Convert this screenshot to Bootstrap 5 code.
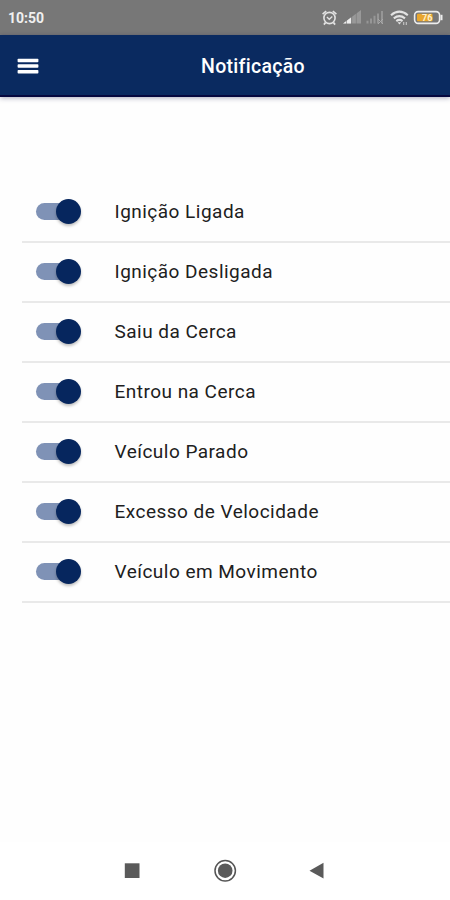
<!DOCTYPE html>
<html lang="pt-BR">
<head>
<meta charset="utf-8">
<meta name="viewport" content="width=device-width, initial-scale=1">
<title>Notificação</title>
<link href="https://cdn.jsdelivr.net/npm/bootstrap@5.3.0/dist/css/bootstrap.min.css" rel="stylesheet">
<style>
  body { font-family: Roboto, "Liberation Sans", sans-serif; background: #fefefe; color: #202020; }
  .status-bar { height: 35px; background: #777; color: #f0f0f0; font-size: 14px; font-weight: 700; line-height: 36px; padding-left: 8px; }
  .status-bar svg, .system-nav svg { display: block; }
  .app-bar { height: 62px; background: #0a2a60; border-bottom: 2px solid #06083f; box-shadow: 0 1px 5px rgba(20, 20, 70, .36); display: grid; grid-template-columns: 56px 1fr 56px; }
  .menu-btn { line-height: 0; border-radius: 0; }
  .app-title { font-size: 19.5px; font-weight: 500; letter-spacing: .3px; line-height: 63px; padding-left: 56px; }
  .settings { padding: 86px 0 0 22px; }
  .settings .setting { height: 60px; border: 0; border-bottom: 2px solid #e9e9e9; border-radius: 0; background: none; padding: 0 0 1px 13.5px; color: inherit; }
  .toggle-box { width: 79px; }
  .settings .form-check-input { width: 44px; height: 17px; margin: 0; border: 0; border-radius: 9px; background: #7f92b6; position: relative; float: none; box-shadow: none; display: block; }
  .settings .form-check-input::after { content: ""; position: absolute; width: 25px; height: 25px; right: -1px; top: -4px; border-radius: 50%; background: #06265e; box-shadow: 0 2px 3px rgba(0, 0, 0, .25); }
  .setting-name { font-size: 19px; letter-spacing: .48px; line-height: 24px; }
  .system-nav { height: 58px; background: #fff; }
</style>
<script src="https://cdn.jsdelivr.net/npm/bootstrap@5.3.0/dist/js/bootstrap.bundle.min.js" defer></script>
</head>
<body class="d-flex flex-column vh-100 overflow-hidden">
  <header>
    <div class="status-bar d-flex justify-content-between">
      <span>10:50</span>
      <svg width="130" height="35" viewBox="320 0 130 35" fill="none" stroke="#e2e2e2" aria-hidden="true">
        <!-- alarm clock -->
        <circle cx="329.5" cy="18" r="5.6" stroke-width="1.6"/>
        <path d="M322.6 14.2l3.6-3M336.4 14.2l-3.6-3M325.5 22.6l-1.6 2M333.5 22.6l1.6 2" stroke-width="1.7"/>
        <path d="M326.9 17l2.4 2.3 3-2.7" stroke-width="1.3"/>
        <!-- mobile signal, first line -->
        <path d="M343 23.5L361 10v13.5z" fill="#999" stroke="none"/>
        <path d="M343 23.5l8-6v6z" fill="#ededed" stroke="none"/>
        <path d="M346.5 16v8M351.7 13v11M356.3 10v14" stroke="#777" stroke-width=".6"/>
        <!-- mobile signal, second line -->
        <path d="M367.5 23.5v-2.8M371 23.5v-5M374.5 23.5v-7.8M378 23.5v-10M382 23.5V11" stroke="#969696" stroke-width="2"/>
        <path d="M378 19l5 5M383 19l-5 5" stroke="#aaa"/>
        <!-- wifi -->
        <path d="M391 15.2q8.400-7 16.800 0M393.800 18.300q5.600-4.400 11.200 0M396.300 21.100q3.100-2.300 6.200 0" stroke-width="2.100"/>
        <path d="M397.600 22.300h3.700l-1.850 2.300z" fill="#e2e2e2" stroke="none"/>
        <path d="M403.700 25v-3M406.300 22v3" stroke="#c8c8c8" stroke-width="1.100"/>
        <!-- battery -->
        <rect x="414.600" y="11.600" width="25" height="11.800" rx="3.600" stroke="#ededed" stroke-width="1.600"/>
        <path d="M441.500 14.800v5.400" stroke="#ededed" stroke-width="2"/>
        <rect x="417" y="13.800" width="15.500" height="7.400" rx="1" fill="#e9a62d" stroke="none"/>
        <text x="427.200" y="21" text-anchor="middle" font-size="9" font-weight="700" fill="#fff1c9" stroke="none">76</text>
      </svg>
    </div>
    <nav class="app-bar text-white">
      <button class="menu-btn btn p-0" type="button" aria-label="Menu">
        <svg width="22" height="18" viewBox="0 0 22 18" fill="#fff"><rect x=".6" y=".7" width="20.800" height="3.600" rx=".8"/><rect x=".6" y="6.300" width="20.800" height="3.400" rx=".8"/><rect x=".6" y="11.900" width="20.800" height="3.600" rx=".8"/></svg>
      </button>
      <h1 class="app-title m-0 text-center">Notificação</h1>
    </nav>
  </header>
  <main class="flex-grow-1">
    <div class="settings list-group">
      <label class="setting list-group-item d-flex align-items-center"><span class="toggle-box"><input class="form-check-input" type="checkbox" role="switch" checked></span><span class="setting-name">Ignição Ligada</span></label>
      <label class="setting list-group-item d-flex align-items-center"><span class="toggle-box"><input class="form-check-input" type="checkbox" role="switch" checked></span><span class="setting-name">Ignição Desligada</span></label>
      <label class="setting list-group-item d-flex align-items-center"><span class="toggle-box"><input class="form-check-input" type="checkbox" role="switch" checked></span><span class="setting-name">Saiu da Cerca</span></label>
      <label class="setting list-group-item d-flex align-items-center"><span class="toggle-box"><input class="form-check-input" type="checkbox" role="switch" checked></span><span class="setting-name">Entrou na Cerca</span></label>
      <label class="setting list-group-item d-flex align-items-center"><span class="toggle-box"><input class="form-check-input" type="checkbox" role="switch" checked></span><span class="setting-name">Veículo Parado</span></label>
      <label class="setting list-group-item d-flex align-items-center"><span class="toggle-box"><input class="form-check-input" type="checkbox" role="switch" checked></span><span class="setting-name">Excesso de Velocidade</span></label>
      <label class="setting list-group-item d-flex align-items-center"><span class="toggle-box"><input class="form-check-input" type="checkbox" role="switch" checked></span><span class="setting-name">Veículo em Movimento</span></label>
    </div>
  </main>
  <footer class="system-nav d-flex justify-content-center">
    <svg width="250" height="58" viewBox="100 842 250 58" fill="#5a5a5a" aria-hidden="true">
      <rect x="124.800" y="863.300" width="14.700" height="14.700"/>
      <circle cx="225.200" cy="870.700" r="10.200" fill="none" stroke="#555" stroke-width="1.500"/>
      <circle cx="225.200" cy="870.700" r="7.300"/>
      <path d="M309.500 870.700l14-7.900v15.800z"/>
    </svg>
  </footer>
</body>
</html>
